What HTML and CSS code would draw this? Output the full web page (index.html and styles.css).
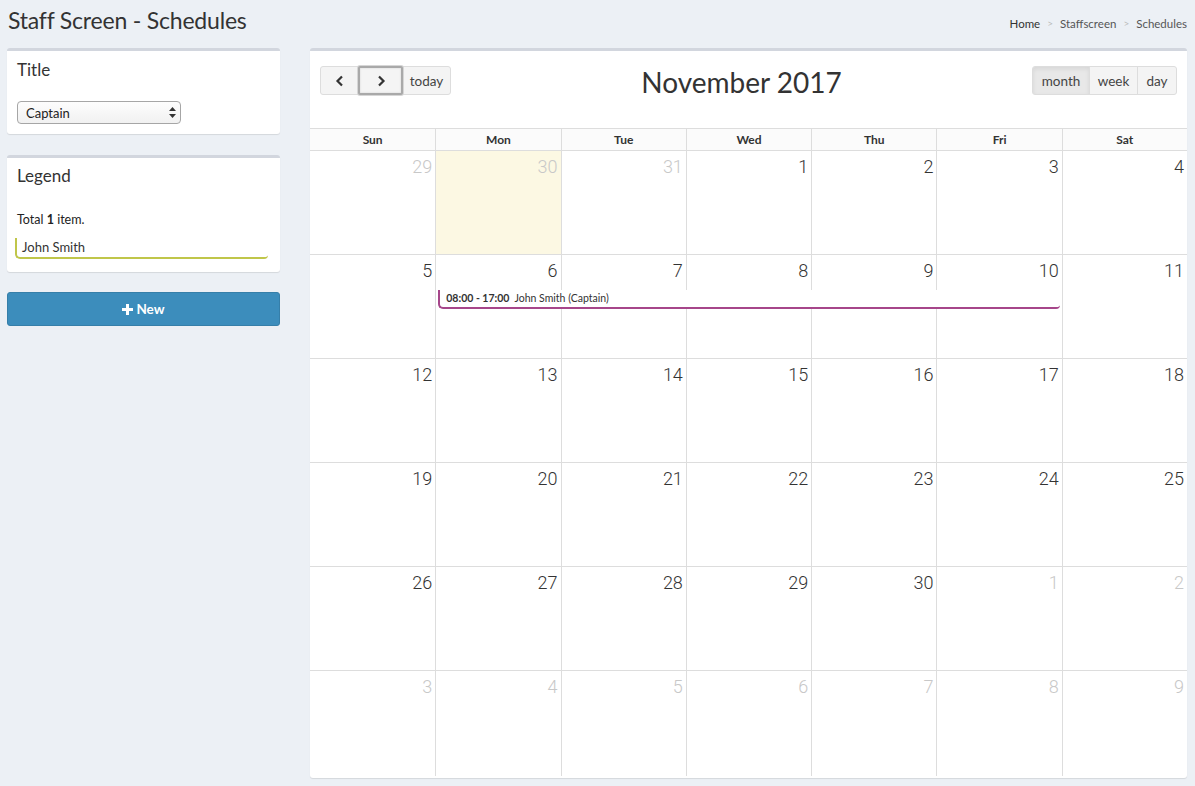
FILE: index.html
```html
<!DOCTYPE html>
<html lang="en">
<head>
<meta charset="utf-8">
<title>Staff Screen - Schedules</title>
<link rel="stylesheet" href="styles.css">
</head>
<body>
<div class="page">
  <header class="content-header">
    <h1>Staff Screen - Schedules</h1>
    <ol class="breadcrumb">
      <li class="crumb-home">Home</li>
      <li class="sep">&gt;</li>
      <li>Staffscreen</li>
      <li class="sep">&gt;</li>
      <li>Schedules</li>
    </ol>
  </header>
  <main class="content">
    <aside class="sidebar">
      <section class="box box-title">
        <h3 class="box-heading">Title</h3>
        <div class="select-wrap">
          <select class="select"><option>Captain</option></select>
          <svg class="select-arrows" width="7" height="11" viewBox="0 0 7 11"><path d="M3.5 0 L7 4 L0 4 Z M3.5 11 L0 7 L7 7 Z" fill="#333"/></svg>
        </div>
      </section>
      <section class="box box-legend">
        <h3 class="box-heading">Legend</h3>
        <p class="total">Total <b>1</b> item.</p>
        <div class="legend-item">John Smith</div>
      </section>
      <button class="btn-new"><svg width="11" height="11" viewBox="0 0 11 11"><path d="M4 0h3v4h4v3H7v4H4V7H0V4h4z" fill="#fff"/></svg>New</button>
    </aside>
    <section class="box calendar-box">
      <div class="toolbar">
        <div class="btn-group">
          <button class="fc-btn btn-prev"><svg width="12" height="12" viewBox="0 0 12 12"><path d="M8 1.5 L3.5 6 L8 10.5" fill="none" stroke="#333" stroke-width="2.2"/></svg></button>
          <button class="fc-btn btn-next"><svg width="12" height="12" viewBox="0 0 12 12"><path d="M4 1.5 L8.5 6 L4 10.5" fill="none" stroke="#333" stroke-width="2.2"/></svg></button>
          <button class="fc-btn btn-today">today</button>
        </div>
        <h2 class="cal-title">November 2017</h2>
        <div class="btn-group">
          <button class="fc-btn active">month</button>
          <button class="fc-btn">week</button>
          <button class="fc-btn">day</button>
        </div>
      </div>
      <div class="cal">
        <div class="cal-head">
          <div>Sun</div><div>Mon</div><div>Tue</div><div>Wed</div><div>Thu</div><div>Fri</div><div>Sat</div>
        </div>
        <div class="week">
          <div class="day other">29</div><div class="day other today">30</div><div class="day other">31</div><div class="day">1</div><div class="day">2</div><div class="day">3</div><div class="day">4</div>
        </div>
        <div class="week">
          <div class="day">5</div><div class="day">6</div><div class="day">7</div><div class="day">8</div><div class="day">9</div><div class="day">10</div><div class="day">11</div>
          <div class="event"><b>08:00 - 17:00</b>&nbsp; John Smith (Captain)</div>
        </div>
        <div class="week">
          <div class="day">12</div><div class="day">13</div><div class="day">14</div><div class="day">15</div><div class="day">16</div><div class="day">17</div><div class="day">18</div>
        </div>
        <div class="week">
          <div class="day">19</div><div class="day">20</div><div class="day">21</div><div class="day">22</div><div class="day">23</div><div class="day">24</div><div class="day">25</div>
        </div>
        <div class="week">
          <div class="day">26</div><div class="day">27</div><div class="day">28</div><div class="day">29</div><div class="day">30</div><div class="day other">1</div><div class="day other">2</div>
        </div>
        <div class="week last">
          <div class="day other">3</div><div class="day other">4</div><div class="day other">5</div><div class="day other">6</div><div class="day other">7</div><div class="day other">8</div><div class="day other">9</div>
        </div>
      </div>
    </section>
  </main>
</div>
</body>
</html>
```

FILE: styles.css
```css
* { box-sizing: border-box; }
html, body { margin: 0; padding: 0; }
body {
  background: #ecf0f5;
  font-family: "Lato", "Open Sans", sans-serif;
  color: #333;
  width: 1195px;
  height: 786px;
  overflow: hidden;
}
.page { padding: 0 8px 0 7px; }
.content-header {
  display: flex;
  justify-content: space-between;
  align-items: center;
  height: 48px;
  padding-bottom: 8px;
}
.content-header h1 {
  margin: 0;
  font-size: 23px;
  font-weight: 400;
  color: #333;
  padding-left: 1px;
  letter-spacing: -0.2px;
}
.breadcrumb {
  list-style: none;
  display: flex;
  gap: 7px;
  margin: 6px 0 0;
  padding: 0;
  font-size: 11.5px;
  color: #444;
}
.breadcrumb .crumb-home { color: #333; }
.breadcrumb li:not(.crumb-home) { color: #555; }
.breadcrumb .sep { color: #bbb !important; font-size: 10px; }
.content {
  display: flex;
  gap: 30px;
  align-items: flex-start;
}
.sidebar {
  width: 273px;
  display: flex;
  flex-direction: column;
}
.box {
  background: #fff;
  border-top: 3px solid #d2d6de;
  border-radius: 3px;
  box-shadow: 0 1px 1px rgba(0,0,0,0.1);
}
.box-heading {
  margin: 0;
  font-size: 17px;
  font-weight: 400;
  color: #333;
  padding: 8px 10px 0;
  height: 39px;
}
.box-title { height: 86px; }
.select-wrap {
  position: relative;
  margin: 11px 0 0 10px;
  width: 164px;
  height: 23px;
}
.select {
  appearance: none;
  -webkit-appearance: none;
  width: 164px;
  height: 23px;
  border: 1px solid #a6a6a6;
  border-radius: 4px;
  background: linear-gradient(#fdfdfd, #f1f1f1);
  font-family: "Lato", sans-serif;
  font-size: 13px;
  color: #222;
  padding: 0 0 0 8px;
  margin: 0;
}
.select-arrows { position: absolute; right: 5px; top: 6px; }
.box-legend { margin-top: 21px; height: 117px; }
.box-legend .box-heading { padding-top: 7px; }
.total {
  margin: 15px 0 0 10px;
  font-size: 12.5px;
  color: #222;
}
.total b { font-weight: 700; }
.legend-item {
  margin: 11px 12px 0 8px;
  height: 21px;
  border-left: 2px solid #c0c64a;
  border-bottom: 2px solid #c0c64a;
  border-radius: 0 0 4px 5px;
  padding: 0 0 0 5px;
  font-size: 13px;
  color: #333;
  line-height: 19px;
}
.btn-new {
  margin-top: 20px;
  height: 34px;
  width: 273px;
  background: #3c8dbc;
  border: 1px solid #367fa9;
  border-radius: 3px;
  color: #fff;
  font-family: "Lato", sans-serif;
  font-weight: 700;
  font-size: 13.5px;
  display: flex;
  align-items: center;
  justify-content: center;
  gap: 3px;
  padding: 0;
}
.calendar-box {
  width: 877px;
  height: 730px;
  display: flex;
  flex-direction: column;
}
.toolbar {
  display: flex;
  justify-content: space-between;
  padding: 15px 10px 0;
  height: 77px;
  align-items: flex-start;
}
.btn-group { display: flex; }
.fc-btn {
  height: 29px;
  background: #f4f4f4;
  border: 1px solid #ddd;
  margin-left: -1px;
  font-family: "Lato", sans-serif;
  font-size: 13.5px;
  color: #444;
  padding: 0 8px;
  display: flex;
  align-items: center;
  justify-content: center;
}
.btn-group .fc-btn:first-child { border-radius: 3px 0 0 3px; margin-left: 0; }
.btn-group .fc-btn:last-child { border-radius: 0 3px 3px 0; }
.btn-prev { width: 39px; }
.btn-next {
  width: 45px;
  border: 2px solid #a9a9a9;
  box-shadow: 0 0 0 1px #d6d6d6, inset 0 0 2px rgba(0,0,0,0.15);
  border-radius: 2px;
  position: relative;
  z-index: 1;
}
.btn-today { width: 49px; }
.fc-btn.active {
  background: #e8e8e8;
  box-shadow: inset 0 2px 4px rgba(0,0,0,0.08);
  width: 58px;
}
.fc-btn:nth-child(2):not(.btn-next) { width: 49px; }
.fc-btn:nth-child(3):not(.btn-today) { width: 40px; }
.cal-title {
  margin: 0;
  font-size: 28px;
  font-weight: 400;
  color: #333;
  line-height: 33px;
}
.cal { flex: 1; display: flex; flex-direction: column; }
.cal-head {
  display: grid;
  grid-template-columns: repeat(7, 1fr);
  border-top: 1px solid #ddd;
  border-bottom: 1px solid #ddd;
  background: #fbfbfb;
}
.cal-head div {
  text-align: center;
  font-weight: 700;
  font-size: 12px;
  color: #333;
  height: 21px;
  line-height: 21px;
  border-left: 1px solid #ddd;
}
.cal-head div:first-child { border-left: 0; }
.week {
  position: relative;
  display: grid;
  grid-template-columns: repeat(7, 1fr);
  height: 104px;
  border-bottom: 1px solid #ddd;
}
.week.last { height: 105px; border-bottom: 0; }
.day {
  border-left: 1px solid #ddd;
  text-align: right;
  padding: 5px 3px 0 0;
  font-family: "Roboto", sans-serif;
  font-weight: 300;
  font-size: 18px;
  color: #333;
  line-height: 21px;
}
.day:first-child { border-left: 0; }
.day.other { color: #c8c8c8; }
.day.today { background: #fcf8e3; }
.event {
  position: absolute;
  top: 35px;
  left: calc(100% / 7 + 3px);
  width: calc(500% / 7 - 5px);
  height: 19px;
  background: #fff;
  border-left: 2px solid #a6468a;
  border-bottom: 2px solid #a6468a;
  border-radius: 0 0 4px 5px;
  font-size: 10.5px;
  color: #333;
  line-height: 16px;
  padding-left: 6px;
}
.event b { font-weight: 700; }
```
